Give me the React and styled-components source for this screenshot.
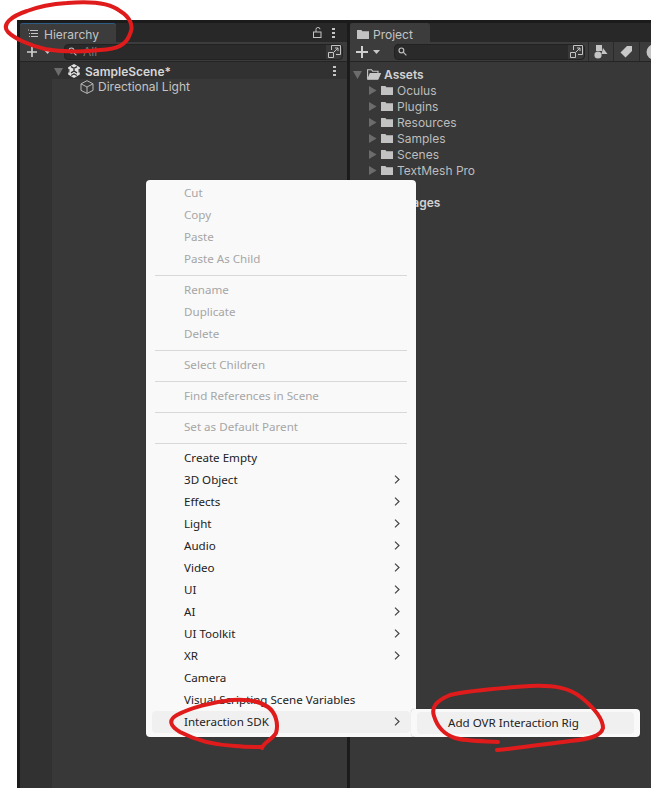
import React from 'react';
import styled, { createGlobalStyle } from 'styled-components';

const GlobalStyle = createGlobalStyle`
    html, body { margin: 0; padding: 0; background: #fff; }
    body { font-family: Inter, 'Liberation Sans', sans-serif; font-size: 12px; }
`;

const Page = styled.div`
    position: relative;
    width: 651px;
    height: 788px;
    overflow: hidden;
    padding: 20px 0 0 17px;
    box-sizing: border-box;
    background: #fff;
`;

const Editor = styled.div`
    display: flex;
    gap: 3px;
    height: 768px;
    padding: 3px 0 0 3px;
    box-sizing: border-box;
    background: #1b1b1b;
`;

const Panel = styled.section`
    display: flex;
    flex-direction: column;
    width: ${p => p.$width || 'auto'};
    flex: ${p => (p.$width ? '0 0 auto' : '1')};
    min-width: 0;
    background: #383838;
`;

const TabStrip = styled.div`
    display: flex;
    align-items: center;
    height: 19px;
    flex: none;
    background: #282828;
`;

const Tab = styled.div`
    display: flex;
    align-items: center;
    gap: ${p => p.$gap};
    box-sizing: border-box;
    width: ${p => p.$width};
    height: 19px;
    padding: 2px 0 0 7px;
    background: #3c3c3c;
    color: #c4c4c4;
    font-size: 12px;
    border-top: 1px solid ${p => p.$accent || '#3c3c3c'};
    border-radius: 3px 3px 0 0;
`;

const TabActions = styled.div`
    display: flex;
    align-items: center;
    gap: 9px;
    margin-left: auto;
    padding-right: 12px;
`;

const Toolbar = styled.div`
    display: flex;
    align-items: center;
    height: 20px;
    flex: none;
    box-sizing: border-box;
    padding-left: ${p => p.$pad};
    background: #3c3c3c;
    border-bottom: 1px solid #242424;

    svg {
        flex: none;
    }
`;

const SearchField = styled.div`
    display: flex;
    align-items: center;
    flex: none;
    box-sizing: border-box;
    width: ${p => p.$width};
    height: 16px;
    margin-left: ${p => p.$offset};
    padding: 0 4px 0 3px;
    border-radius: 4px;
    background: #2a2a2a;
    color: #777;
    font-size: 12px;
    border: 1px solid #222;
`;

const SearchText = styled.span`
    margin-left: 6px;
`;

const ExpandCell = styled.div`
    display: flex;
    align-items: center;
    justify-content: center;
    width: 16px;
    height: 14px;
    margin-left: auto;
    margin-right: -4px;
    background: #383838;
    border-radius: 0 4px 4px 0;
`;

const ToolButton = styled.div`
    display: flex;
    align-items: center;
    justify-content: center;
    flex: none;
    width: ${p => p.$width || '26px'};
    height: 19px;
    margin-left: ${p => p.$offset || '0'};
    border-left: 1px solid #2a2a2a;
    box-sizing: border-box;
`;

const SceneRow = styled.div`
    display: flex;
    align-items: center;
    height: 17px;
    flex: none;
    box-sizing: border-box;
    padding: 1px 11px 0 34px;
    background: #313131;
    color: #d6d6d6;
    font-weight: 600;
    font-size: 12px;
`;

const SceneIconSlot = styled.span`
    display: flex;
    margin-left: 4px;
`;

const SceneName = styled.span`
    margin-left: 4px;
    flex: 1;
`;

const HierarchyBody = styled.div`
    display: flex;
    flex: 1;
`;

const Gutter = styled.div`
    width: 32px;
    flex: none;
    background: #313131;
`;

const HierarchyRows = styled.div`
    flex: 1;
    padding: 0 0 0 28px;
`;

const LightRow = styled.div`
    display: flex;
    align-items: center;
    gap: 4px;
    height: 15px;
    color: #c4c4c4;
    font-size: 12px;
`;

const ProjectTree = styled.div`
    display: flex;
    flex-direction: column;
    padding: 4px 0 0 3px;
`;

const TreeRow = styled.div`
    display: flex;
    align-items: center;
    height: 16px;
    padding-left: ${p => (p.$root ? '0' : '15px')};
    margin-top: ${p => p.$gap || '0'};
    color: ${p => (p.$root ? '#d2d2d2' : '#bdbdbd')};
    font-weight: ${p => (p.$root ? 600 : 400)};
    font-size: 12px;
`;

const TreeSpacer = styled.span`
    width: ${p => p.$width};
`;

const TreeLabel = styled.span`
    margin-left: ${p => (p.$root ? '3px' : '4px')};
`;

const Menu = styled.div`
    position: absolute;
    left: 146px;
    top: 180px;
    width: 270px;
    height: 557px;
    box-sizing: border-box;
    padding: 2px 6px 0;
    background: #f9f9f9;
    border-radius: 4px;
    box-shadow: 0 0 1px rgba(0, 0, 0, 0.35);
    font-family: 'Noto Sans', 'Open Sans', sans-serif;
    font-size: 11.6px;
`;

const MenuRow = styled.div`
    display: flex;
    align-items: center;
    justify-content: space-between;
    height: 22px;
    padding: 0 10px 1px 32px;
    box-sizing: border-box;
    border-radius: 4px;
    color: ${p => (p.$disabled ? '#a6a6a6' : '#222')};
    background: ${p => (p.$active ? '#f0f0f0' : 'transparent')};
`;

const MenuSeparator = styled.div`
    height: 1px;
    margin: 5px 3px 3px;
    background: #d8d8d8;
`;

const SubMenu = styled.div`
    position: absolute;
    left: 411px;
    top: 709px;
    width: 229px;
    height: 28px;
    box-sizing: border-box;
    padding: 3px 6px;
    background: #f9f9f9;
    border-radius: 4px;
    box-shadow: 0 0 1px rgba(0, 0, 0, 0.35);
    font-family: 'Noto Sans', 'Open Sans', sans-serif;
    font-size: 11.6px;
`;

const SubMenuRow = styled.div`
    display: flex;
    align-items: center;
    height: 22px;
    box-sizing: border-box;
    padding: 0 0 1px 31px;
    border-radius: 4px;
    background: #f0f0f0;
    color: #222;
`;

const Annotations = styled.svg`
    position: absolute;
    left: 0;
    top: 0;
    pointer-events: none;
`;

const ListIcon = () => (
    <svg width="12" height="10" viewBox="0 0 12 10" fill="none" stroke="#c4c4c4" strokeWidth="1">
        <path d="M1 1h1M3 1.5h8M2 4.5h1M4 4.5h7M2 7.5h1M4 7.5h7" />
    </svg>
);

const FolderIcon = ({ size = 12, color = '#c2c2c2' }) => (
    <svg width={size} height={Math.round(size * 0.85)} viewBox="0 0 12 10" fill={color}>
        <path d="M0 1h4.4l1 1.2H12V10H0z" />
    </svg>
);

const OpenFolderIcon = () => (
    <svg width="14" height="11" viewBox="0 0 14 11" fill="none" stroke="#c8c8c8" strokeWidth="1.1">
        <path d="M.6 10V.8h4l1 1.4h5.4v2" />
        <path d="M.8 10.2h10.1L13.4 4.6H3.2z" fill="#c8c8c8" />
    </svg>
);

const Triangle = ({ open, color = '#6c6c6c' }) => (
    <svg width="9" height="9" viewBox="0 0 9 9" fill={color}>
        <path d={open ? 'M0 1h9L4.5 9z' : 'M1 0l7.5 4.5L1 9z'} />
    </svg>
);

const Plus = ({ size = 12 }) => (
    <svg width={size} height={size} viewBox="0 0 12 12" fill="none" stroke="#d0d0d0" strokeWidth="2">
        <path d="M6 0v12M0 6h12" />
    </svg>
);

const Caret = ({ gap }) => (
    <svg width="7" height="4" viewBox="0 0 7 4" fill="#c8c8c8" style={{ marginLeft: gap }}>
        <path d="M0 0h7L3.5 4z" />
    </svg>
);

const Magnifier = () => (
    <svg width="9" height="9" viewBox="0 0 9 9" fill="none" stroke="#bdbdbd" strokeWidth="1.2">
        <circle cx="3.4" cy="3.4" r="2.4" />
        <path d="M5.2 5.2 8.4 8.4" />
    </svg>
);

const ExpandIcon = () => (
    <svg width="13" height="13" viewBox="0 0 13 13" fill="none" stroke="#c4c4c4" strokeWidth="1">
        <path d="M3.5 5V.5h9v9H8M.5 7.5h5v5h-5zM6 7l4-4M7 3h3v3" />
    </svg>
);

const LockIcon = () => (
    <svg width="10" height="11" viewBox="0 0 10 11" fill="none" stroke="#c4c4c4" strokeWidth="1">
        <rect x=".5" y="5" width="7.5" height="5.5" />
        <path d="M3 5V2.6a2 2 0 0 1 4-.3" />
    </svg>
);

const Dots = () => (
    <svg width="3" height="10" viewBox="0 0 3 10" fill="#c4c4c4">
        <rect width="3" height="2" />
        <rect y="4" width="3" height="2" />
        <rect y="8" width="3" height="2" />
    </svg>
);

const UnityIcon = () => (
    <svg width="14" height="14" viewBox="0 0 14 14" fill="#e2e2e2">
        <path d="M7 0 12.8 3.3V10.6L7 14 1.2 10.6V3.3z" />
        <path d="M7 3.6v3.2M7 7l-3 1.9M7 7l3 1.9M4 2.6 7 4.2l3-1.6M1.8 5v3.6M12.2 5v3.6M4.2 11.5 7 10l2.8 1.5" fill="none" stroke="#313131" strokeWidth="1.3" />
    </svg>
);

const CubeIcon = () => (
    <svg width="14" height="14" viewBox="0 0 14 14" fill="none" stroke="#b8b8b8" strokeWidth="1">
        <path d="M7 .7 13 3.8v6.6l-6 3-6-3V3.8zM1 3.8 7 7l6-3.2M7 7v6.3" />
    </svg>
);

const ShapesIcon = () => (
    <svg width="14" height="14" viewBox="0 0 14 14" fill="#c4c4c4">
        <rect x="2" y="0" width="6" height="6" />
        <circle cx="4" cy="10" r="3.6" />
        <path d="M9 3l4.5 6H7.5z" />
    </svg>
);

const TagIcon = () => (
    <svg width="13" height="13" viewBox="0 0 13 13" fill="#c8c8c8">
        <path d="M7 1h5v5l-6.5 6.5L.5 7.5z" />
    </svg>
);

const HalfDisc = () => (
    <svg width="13" height="16" viewBox="0 0 13 16" fill="#c4c4c4">
        <circle cx="8" cy="8" r="7.5" />
    </svg>
);

const Chevron = () => (
    <svg width="6" height="9" viewBox="0 0 6 9" fill="none" stroke="#444" strokeWidth="1.2">
        <path d="M1 .6 5 4.5 1 8.4" />
    </svg>
);

const assetFolders = ['Oculus', 'Plugins', 'Resources', 'Samples', 'Scenes', 'TextMesh Pro'];

const menuGroups = [
    [
        { label: 'Cut', disabled: true },
        { label: 'Copy', disabled: true },
        { label: 'Paste', disabled: true },
        { label: 'Paste As Child', disabled: true },
    ],
    [
        { label: 'Rename', disabled: true },
        { label: 'Duplicate', disabled: true },
        { label: 'Delete', disabled: true },
    ],
    [{ label: 'Select Children', disabled: true }],
    [{ label: 'Find References in Scene', disabled: true }],
    [{ label: 'Set as Default Parent', disabled: true }],
    [
        { label: 'Create Empty' },
        { label: '3D Object', sub: true },
        { label: 'Effects', sub: true },
        { label: 'Light', sub: true },
        { label: 'Audio', sub: true },
        { label: 'Video', sub: true },
        { label: 'UI', sub: true },
        { label: 'AI', sub: true },
        { label: 'UI Toolkit', sub: true },
        { label: 'XR', sub: true },
        { label: 'Camera' },
        { label: 'Visual Scripting Scene Variables' },
        { label: 'Interaction SDK', sub: true, active: true },
    ],
];

const App = () => {
    return (
        <Page>
            <GlobalStyle />
            <Editor>
                <Panel $width="327px">
                    <TabStrip>
                        <Tab $width="96px" $gap="5px" $accent="#2c5d87">
                            <ListIcon />
                            Hierarchy
                        </Tab>
                        <TabActions>
                            <LockIcon />
                            <Dots />
                        </TabActions>
                    </TabStrip>
                    <Toolbar $pad="7px">
                        <Plus size={10} />
                        <Caret gap="7px" />
                        <SearchField $width="279px" $offset="13px">
                            <Magnifier />
                            <SearchText>All</SearchText>
                            <ExpandCell>
                                <ExpandIcon />
                            </ExpandCell>
                        </SearchField>
                    </Toolbar>
                    <SceneRow>
                        <Triangle open />
                        <SceneIconSlot>
                            <UnityIcon />
                        </SceneIconSlot>
                        <SceneName>SampleScene*</SceneName>
                        <Dots />
                    </SceneRow>
                    <HierarchyBody>
                        <Gutter />
                        <HierarchyRows>
                            <LightRow>
                                <CubeIcon />
                                Directional Light
                            </LightRow>
                        </HierarchyRows>
                    </HierarchyBody>
                </Panel>
                <Panel>
                    <TabStrip>
                        <Tab $width="80px" $gap="4px">
                            <FolderIcon />
                            Project
                        </Tab>
                    </TabStrip>
                    <Toolbar $pad="6px">
                        <Plus />
                        <Caret gap="5px" />
                        <SearchField $width="191px" $offset="14px">
                            <Magnifier />
                            <ExpandCell>
                                <ExpandIcon />
                            </ExpandCell>
                        </SearchField>
                        <ToolButton $width="25px" $offset="3px">
                            <ShapesIcon />
                        </ToolButton>
                        <ToolButton>
                            <TagIcon />
                        </ToolButton>
                        <ToolButton>
                            <HalfDisc />
                        </ToolButton>
                    </Toolbar>
                    <ProjectTree>
                        <TreeRow $root>
                            <Triangle open />
                            <TreeSpacer $width="5px" />
                            <OpenFolderIcon />
                            <TreeLabel $root>Assets</TreeLabel>
                        </TreeRow>
                        {assetFolders.map(name => (
                            <TreeRow key={name}>
                                <Triangle />
                                <TreeSpacer $width="4px" />
                                <FolderIcon />
                                <TreeLabel>{name}</TreeLabel>
                            </TreeRow>
                        ))}
                        <TreeRow $root $gap="16px">
                            <Triangle />
                            <TreeSpacer $width="5px" />
                            <FolderIcon size={14} />
                            <TreeLabel $root>Packages</TreeLabel>
                        </TreeRow>
                    </ProjectTree>
                </Panel>
            </Editor>
            <Menu>
                {menuGroups.map((group, i) => (
                    <React.Fragment key={i}>
                        {i > 0 && <MenuSeparator />}
                        {group.map(item => (
                            <MenuRow key={item.label} $disabled={item.disabled} $active={item.active}>
                                {item.label}
                                {item.sub && <Chevron />}
                            </MenuRow>
                        ))}
                    </React.Fragment>
                ))}
            </Menu>
            <SubMenu>
                <SubMenuRow>Add OVR Interaction Rig</SubMenuRow>
            </SubMenu>
            <Annotations width="651" height="788" viewBox="0 0 651 788" fill="none" stroke="#e01b1b" strokeWidth="4" strokeLinecap="round" strokeLinejoin="round">
                <path d="M67 3C90 1 110 3 120 11 130 17 134 26 130 34 126 45 118 49 100 50 85 52 62 52 45 49 28 45 14 38 8 32 1 24 12 16 27 11 40 6 52 4 67 3" />
                <path d="M262 748C264 742 272 740 276 733 279 723 275 712 268 707 258 700 245 699 232 700 212 702 190 708 177 715 168 720 170 726 180 732 195 740 215 745 235 746 245 747 255 747 262 747" />
                <path d="M498 742C480 741 465 741 455 738 443 734 437 726 434 716 431 707 436 701 450 695 470 690 500 688 530 686 555 685 570 688 582 698 594 708 603 718 603 728 601 736 590 739 570 741 545 744 520 748 497 750" />
            </Annotations>
        </Page>
    );
};

export default App;
